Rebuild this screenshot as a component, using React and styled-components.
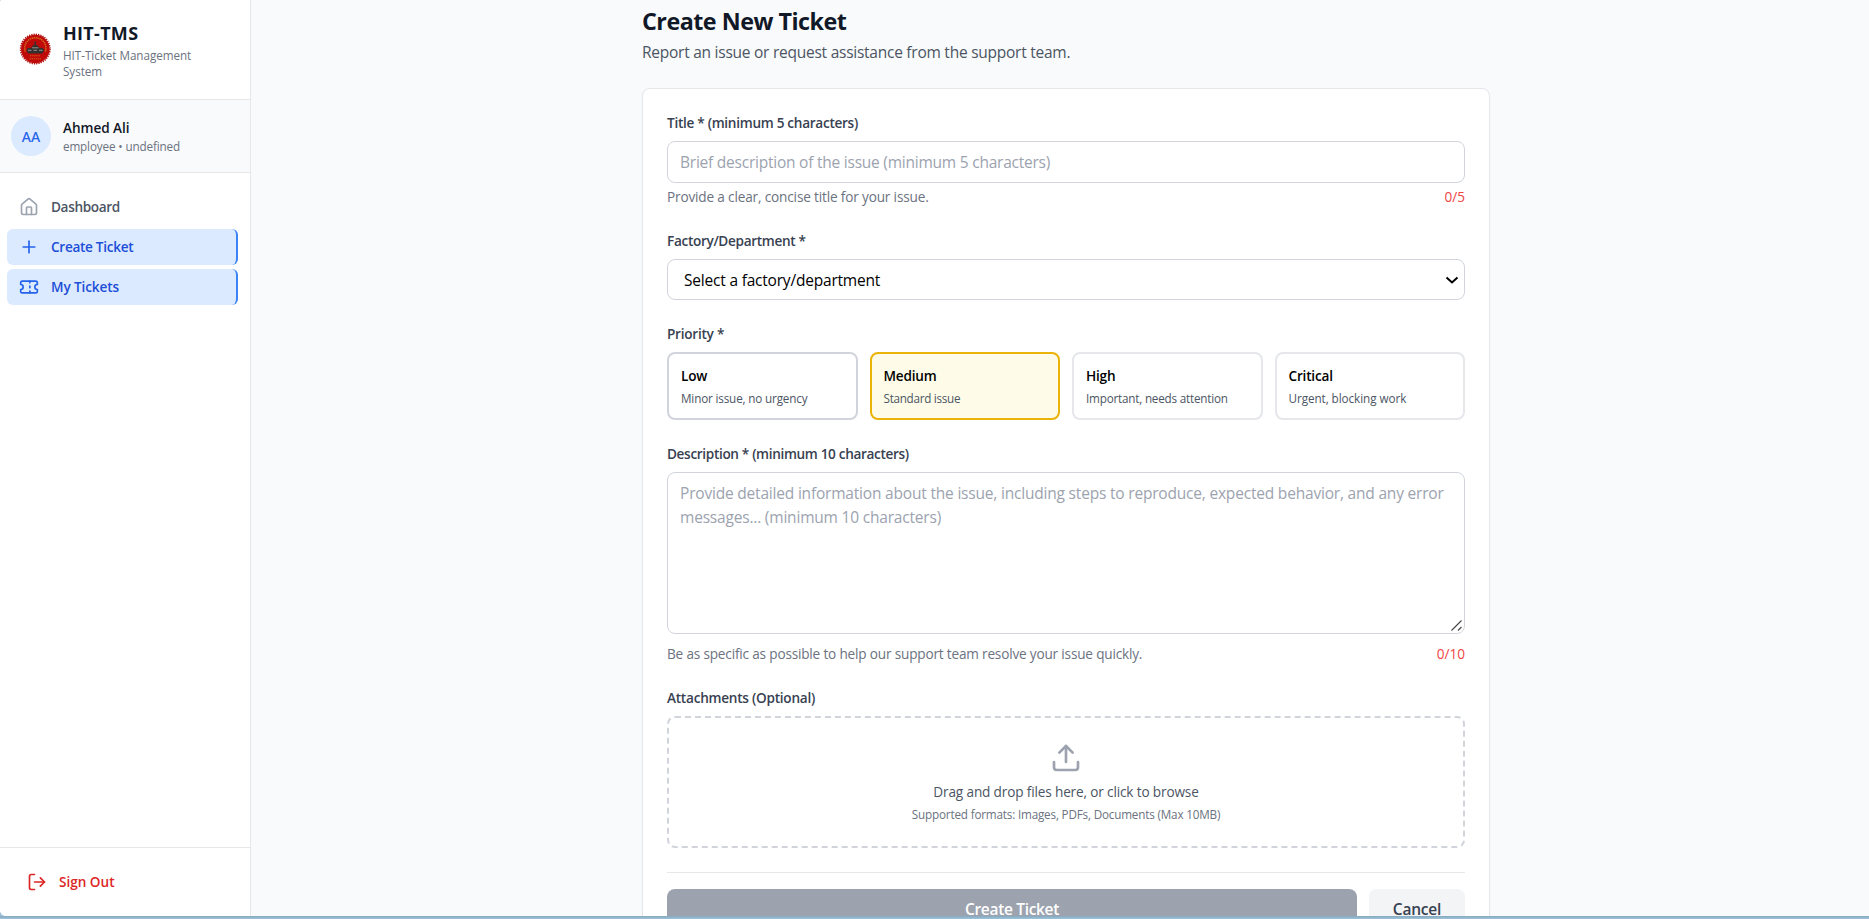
import React from 'react';
import styled, { createGlobalStyle, css } from 'styled-components';
import { House, LogOut, Plus, Ticket, Upload } from 'lucide-react';

const GlobalStyle = createGlobalStyle`
  *, *::before, *::after { box-sizing: border-box; }
  html, body, #root { height: 100%; }
  body {
    margin: 0;
    overflow: hidden;
    background: #9cc0d6;
    color: #111827;
    font-family: "Open Sans", "Noto Sans", sans-serif;
  }
  h1, h2, p { margin: 0; }
  button, input, textarea { font-family: inherit; }
`;

const tracking = css`letter-spacing: ${(p) => p.$track ?? -0.2}px;`;

const Desktop = styled.div`
  height: 919px;
  padding-bottom: 3px;
  background: linear-gradient(#84a9c0, #9fc3d8) bottom / 100% 3px no-repeat, #9cc0d6;
`;

const Window = styled.div`
  display: flex;
  height: 916px;
  overflow: hidden;
  background: #f9fafb;
  border-radius: 2px 0 0 6px;
`;

const Sidebar = styled.aside`
  display: flex;
  flex-direction: column;
  flex: none;
  width: 251px;
  background: #fff;
  border-right: 1px solid #e5e7eb;
`;

const Brand = styled.header`
  display: flex;
  align-items: center;
  gap: 12px;
  height: 100px;
  padding: 0 19px;
  border-bottom: 1px solid #e5e7eb;
`;

const EmblemArt = styled.svg`
  flex: none;
  width: 32px;
  height: 32px;
  margin-bottom: 2px;
`;

const BrandName = styled.h2`
  font-size: 18px;
  font-weight: 700;
  line-height: 28px;
  margin-top: -1px;
  ${tracking}
`;

const Tiny = styled.p`
  font-size: 11.7px;
  line-height: 16px;
  color: ${(p) => p.$color || '#6b7280'};
  ${tracking}
`;

const UserPanel = styled.section`
  display: flex;
  align-items: center;
  gap: 12px;
  height: 73px;
  padding: 0 11px;
  background: #f9fafb;
  border-bottom: 1px solid #e5e7eb;
`;

const Avatar = styled.div`
  display: grid;
  place-items: center;
  width: 40px;
  height: 40px;
  border-radius: 50%;
  background: #dbeafe;
  color: #2563eb;
  font-family: "Noto Sans", sans-serif;
  font-size: 14px;
  font-weight: 500;
`;

const UserName = styled.p`
  font-size: 13.6px;
  font-weight: 600;
  line-height: 20px;
  ${tracking}
`;

const Nav = styled.nav`
  display: flex;
  flex-direction: column;
  flex: 1;
  gap: 4px;
  padding: 16px 12px 0 7px;
`;

const NavItem = styled.a`
  display: flex;
  align-items: center;
  gap: 12px;
  height: 36px;
  padding: 0 12px;
  border-radius: 6px;
  font-size: 13.6px;
  font-weight: 600;
  line-height: 20px;
  color: #4b5563;
  ${tracking}
  svg { color: #9ca3af; }
  ${(p) => p.$active && css`
    background: #dbeafe;
    color: #1d4ed8;
    border-right: 2px solid #3b82f6;
    svg { color: #2563eb; }
  `}
`;

const SidebarFooter = styled.footer`
  height: 69px;
  padding: 16px 12px;
  border-top: 1px solid #e5e7eb;
`;

const SignOut = styled.a`
  display: flex;
  align-items: center;
  gap: 12px;
  height: 36px;
  padding-left: 15px;
  font-size: 13.6px;
  font-weight: 600;
  line-height: 20px;
  color: #dc2626;
  letter-spacing: -0.02px;
`;

const Main = styled.main`
  flex: 1;
  padding: 5px 0 0 12px;
`;

const Page = styled.div`
  width: 848px;
  margin: 0 auto;
  padding-bottom: 24px;
`;

const PageTitle = styled.h1`
  font-size: 23.3px;
  font-weight: 700;
  line-height: 32px;
  letter-spacing: -0.5px;
`;

const PageLead = styled.p`
  margin-top: 3px;
  font-size: 15.5px;
  line-height: 24px;
  letter-spacing: -0.25px;
  color: #4b5563;
`;

const Card = styled.form`
  display: flex;
  flex-direction: column;
  gap: 24px;
  margin-top: 24px;
  padding: 24px;
  background: #fff;
  border: 1px solid #e5e7eb;
  border-radius: 8px;
  box-shadow: 0 1px 2px rgba(0, 0, 0, 0.05);
`;

const Field = styled.div`
  display: flex;
  flex-direction: column;
`;

const Label = styled.label`
  margin-bottom: 8px;
  font-size: 13.6px;
  font-weight: 600;
  line-height: 20px;
  color: #374151;
  ${tracking}
`;

const control = css`
  width: 100%;
  border: 1px solid #d1d5db;
  border-radius: 8px;
  background: #fff;
  font-size: 15.5px;
  line-height: 24px;
  outline: none;
  &::placeholder { color: #9ca3af; opacity: 1; }
`;

const TextInput = styled.input`
  ${control}
  height: 42px;
  padding: 8px 12px;
  letter-spacing: -0.23px;
`;

const SelectBox = styled.div`
  ${control}
  display: flex;
  align-items: center;
  justify-content: space-between;
  height: 41px;
  padding: 0 5px 0 16px;
  color: #000;
  letter-spacing: -0.2px;
`;

const TextAreaFrame = styled.div`
  position: relative;
  height: 162px;
`;

const TextArea = styled.textarea`
  ${control}
  display: block;
  height: 100%;
  padding: 8px 12px;
  resize: none;
  letter-spacing: -0.195px;
`;

const Grip = styled.svg`
  position: absolute;
  right: 2px;
  bottom: 2px;
  width: 12px;
  height: 12px;
  fill: none;
  stroke: #444;
  stroke-width: 1.1;
`;

const HintRow = styled.div`
  display: flex;
  justify-content: space-between;
  margin-top: ${(p) => p.$gap}px;
`;

const Hint = styled.span`
  font-size: 13.6px;
  line-height: 20px;
  color: ${(p) => (p.$error ? '#ef4444' : '#6b7280')};
  ${tracking}
`;

const PriorityGrid = styled.div`
  display: grid;
  grid-template-columns: repeat(4, 1fr);
  gap: 12px;
`;

const tones = {
  strong: ['#d1d5db', '#fff'],
  selected: ['#eab308', '#fefce8'],
  plain: ['#e5e7eb', '#fff'],
};

const PriorityCard = styled.div`
  height: 68px;
  padding: 12px;
  border: 2px solid ${(p) => tones[p.$tone][0]};
  border-radius: 8px;
  background: ${(p) => tones[p.$tone][1]};
`;

const PriorityName = styled.p`
  margin-bottom: 4px;
  font-size: 13.6px;
  font-weight: 600;
  line-height: 20px;
  color: #000;
  ${tracking}
`;

const DropZone = styled.div`
  display: flex;
  flex-direction: column;
  align-items: center;
  height: 132px;
  padding-top: 24px;
  border: 2px dashed #d1d5db;
  border-radius: 8px;
  color: #9ca3af;
`;

const DropText = styled.p`
  margin: 8px 0 4px;
  font-size: 13.6px;
  line-height: 20px;
  letter-spacing: -0.15px;
  color: #4b5563;
`;

const Actions = styled.div`
  display: flex;
  gap: 12px;
  padding-top: 16px;
  border-top: 1px solid #e5e7eb;
`;

const Button = styled.button`
  flex: ${(p) => (p.$primary ? '1' : 'none')};
  width: ${(p) => (p.$primary ? 'auto' : '96px')};
  height: 40px;
  padding: 0;
  border: 0;
  border-radius: 8px;
  background: ${(p) => (p.$primary ? '#9ca3af' : '#f3f4f6')};
  color: ${(p) => (p.$primary ? '#fff' : '#374151')};
  font-size: 15.5px;
  font-weight: 600;
  line-height: 24px;
  ${tracking}
`;

const Emblem = () => (
  <EmblemArt viewBox="0 0 32 32">
    <circle cx="16.300" cy="16" r="14.300" fill="#c00a0a" />
    <circle cx="16.300" cy="16" r="14.700" fill="none" stroke="#b01212" strokeWidth="1.500" strokeDasharray="1.300 1.010" />
    <path d="M6.200 18.500a10.600 10.600 0 1 1 20.200 0" fill="none" stroke="#d98a1c" strokeWidth="1.500" strokeDasharray="1.300 .7" opacity=".8" />
    <path d="M15.500 8.500h1.500v3.700h1.800l.8 2.300 4.600.8 1 2.200-1.800 3H9.200l-1.800-3 1-2.200 4.600-.8.700-2.300h1.800z" fill="#33302e" />
    <path d="M13 14.800h6.500M9 17.300h3.500m2 0h3.500m2 0h3.500" stroke="#99928c" strokeWidth="1" fill="none" />
    <path d="M11 22.800h10.500M10.500 25.800h11.500" stroke="#d9781c" strokeWidth=".9" strokeDasharray="1.500 .6" opacity=".8" />
  </EmblemArt>
);

const ChevronIcon = () => (
  <svg width="14" height="14" viewBox="0 0 14 14" fill="none" stroke="currentColor" strokeWidth="2">
    <path d="M1.500 4.500l5.500 5 5.500-5" />
  </svg>
);

const priorities = [
  { name: 'Low', text: 'Minor issue, no urgency', tone: 'strong', track: -0.16 },
  { name: 'Medium', text: 'Standard issue', tone: 'selected', track: -0.28 },
  { name: 'High', text: 'Important, needs attention', tone: 'plain', track: -0.2 },
  { name: 'Critical', text: 'Urgent, blocking work', tone: 'plain', track: -0.06 },
];

export default function App() {
  return (
    <>
      <GlobalStyle />
      <Desktop>
        <Window>
          <Sidebar>
            <Brand>
              <Emblem />
              <div>
                <BrandName $track={0.3}>HIT-TMS</BrandName>
                <Tiny $track={-0.05}>HIT-Ticket Management System</Tiny>
              </div>
            </Brand>
            <UserPanel>
              <Avatar>AA</Avatar>
              <div>
                <UserName $track={-0.07}>Ahmed Ali</UserName>
                <Tiny $track={-0.14}>employee • undefined</Tiny>
              </div>
            </UserPanel>
            <Nav>
              <NavItem $track={-0.35}><House size={20} />Dashboard</NavItem>
              <NavItem $active $track={-0.3}><Plus size={20} />Create Ticket</NavItem>
              <NavItem $active $track={-0.12}><Ticket size={20} />My Tickets</NavItem>
            </Nav>
            <SidebarFooter>
              <SignOut><LogOut size={20} />Sign Out</SignOut>
            </SidebarFooter>
          </Sidebar>
          <Main>
            <Page>
              <PageTitle>Create New Ticket</PageTitle>
              <PageLead>Report an issue or request assistance from the support team.</PageLead>
              <Card>
                <Field>
                  <Label $track={-0.29}>Title * (minimum 5 characters)</Label>
                  <TextInput placeholder="Brief description of the issue (minimum 5 characters)" />
                  <HintRow $gap={4}>
                    <Hint $track={-0.16}>Provide a clear, concise title for your issue.</Hint>
                    <Hint $error $track={0}>0/5</Hint>
                  </HintRow>
                </Field>
                <Field>
                  <Label $track={-0.33}>Factory/Department *</Label>
                  <SelectBox>Select a factory/department<ChevronIcon /></SelectBox>
                </Field>
                <Field>
                  <Label $track={-0.25}>Priority *</Label>
                  <PriorityGrid>
                    {priorities.map((p) => (
                      <PriorityCard key={p.name} $tone={p.tone}>
                        <PriorityName>{p.name}</PriorityName>
                        <Tiny $color="#4b5563" $track={p.track}>{p.text}</Tiny>
                      </PriorityCard>
                    ))}
                  </PriorityGrid>
                </Field>
                <Field>
                  <Label $track={-0.34}>Description * (minimum 10 characters)</Label>
                  <TextAreaFrame>
                    <TextArea placeholder="Provide detailed information about the issue, including steps to reproduce, expected behavior, and any error messages... (minimum 10 characters)" />
                    <Grip viewBox="0 0 12 12"><path d="M.500 10.500l10-10M7 10.500l3.500-3.500" /></Grip>
                  </TextAreaFrame>
                  <HintRow $gap={10}>
                    <Hint $track={-0.18}>Be as specific as possible to help our support team resolve your issue quickly.</Hint>
                    <Hint $error $track={0}>0/10</Hint>
                  </HintRow>
                </Field>
                <Field>
                  <Label $track={-0.25}>Attachments (Optional)</Label>
                  <DropZone>
                    <Upload size={32} />
                    <DropText>Drag and drop files here, or click to browse</DropText>
                    <Tiny $track={-0.18}>Supported formats: Images, PDFs, Documents (Max 10MB)</Tiny>
                  </DropZone>
                </Field>
                <Actions>
                  <Button type="button" $primary $track={-0.33}>Create Ticket</Button>
                  <Button type="button">Cancel</Button>
                </Actions>
              </Card>
            </Page>
          </Main>
        </Window>
      </Desktop>
    </>
  );
}
